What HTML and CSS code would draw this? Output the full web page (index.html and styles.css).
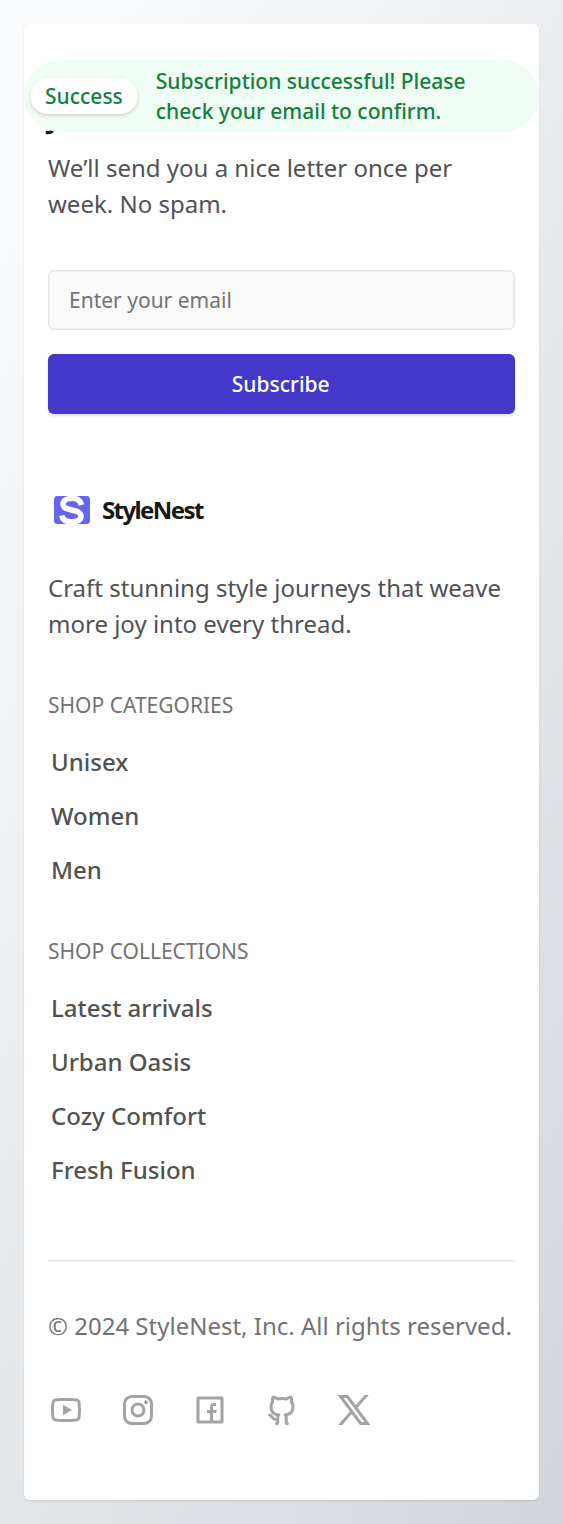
FILE: index.html
```html
<!DOCTYPE html>
<html lang="en">
<head>
<meta charset="utf-8">
<title>StyleNest</title>
<link rel="stylesheet" href="styles.css">
</head>
<body>
<div class="page">
  <main class="card">
    <div class="toast" role="status">
      <span class="toast-badge">Success</span>
      <p class="toast-text">Subscription successful! Please check your email to confirm.</p>
    </div>
    <section class="newsletter">
      <h2 class="newsletter-title">Join our newsletter</h2>
      <p class="copy">We’ll send you a nice letter once per week. No spam.</p>
      <form class="form">
        <input class="field" type="email" placeholder="Enter your email">
        <button class="submit" type="button">Subscribe</button>
      </form>
    </section>
    <footer class="footer">
      <div class="brand">
        <svg class="brand-mark" viewBox="0 0 36 28">
          <rect width="36" height="28" rx="3.5" fill="#6366f1"/>
          <path d="M27.500 9C26.500 5 23.300 2.200 18.500 2.200C13 2.200 9 4.500 9 8.300C9 12 12.500 13 17.500 14C22.500 15 27 16 27 20C27 24.200 23.500 25.800 18 25.800C12.500 25.800 8.500 24 7.800 19.500" fill="none" stroke="#fff" stroke-width="5.5"/>
        </svg>
        <span class="brand-name">StyleNest</span>
      </div>
      <p class="copy">Craft stunning style journeys that weave more joy into every thread.</p>
      <nav class="group">
        <h3 class="group-title">SHOP CATEGORIES</h3>
        <a class="link">Unisex</a>
        <a class="link">Women</a>
        <a class="link">Men</a>
      </nav>
      <nav class="group">
        <h3 class="group-title">SHOP COLLECTIONS</h3>
        <a class="link">Latest arrivals</a>
        <a class="link">Urban Oasis</a>
        <a class="link">Cozy Comfort</a>
        <a class="link">Fresh Fusion</a>
      </nav>
      <div class="legal">
        <p class="copyright">© 2024 StyleNest, Inc. All rights reserved.</p>
        <div class="social">
          <svg class="icon" viewBox="0 0 24 24"><path d="M19.607 6.995C19.531 6.697 19.315 6.472 19.068 6.403C18.63 6.281 16.501 6 12 6S5.373 6.281 4.932 6.403C4.688 6.471 4.472 6.696 4.395 6.995C4.286 7.419 4 9.196 4 12S4.286 16.581 4.395 17.006C4.471 17.303 4.687 17.528 4.933 17.597C5.373 17.719 7.501 18 12 18S18.63 17.719 19.07 17.597C19.314 17.529 19.53 17.304 19.607 17.005C19.716 16.581 20 14.8 20 12S19.716 7.419 19.607 6.995ZM21.544 6.498C22 8.28 22 12 22 12S22 15.72 21.544 17.502C21.29 18.487 20.547 19.262 19.606 19.524C17.897 20 12 20 12 20S6.108 20 4.396 19.524C3.451 19.258 2.709 18.483 2.458 17.502C2 15.72 2 12 2 12S2 8.28 2.458 6.498C2.712 5.513 3.455 4.738 4.396 4.476C6.108 4 12 4 12 4S17.897 4 19.606 4.476C20.551 4.742 21.293 5.517 21.544 6.498ZM10 15.5V8.5L16 12Z"/></svg>
          <svg class="icon" viewBox="0 0 24 24"><rect class="line" x="3" y="3" width="18" height="18" rx="4.8"/><circle class="line" cx="12" cy="12" r="4"/><circle cx="17.25" cy="6.75" r="1.25"/></svg>
          <svg class="icon" viewBox="0 0 24 24"><path d="M14 19H19V5H5V19H12V14H10V12H12V10.654C12 9.513 12.119 9.099 12.342 8.682C12.565 8.265 12.892 7.937 13.309 7.714C13.636 7.54 14.034 7.434 14.806 7.385C15.111 7.365 15.509 7.39 16 7.46V9.36H15.5C14.583 9.36 14.204 9.403 13.978 9.524C13.86 9.587 13.777 9.67 13.714 9.788C13.593 10.013 14 9.736 14 10.654V12H16.5L16 14H14ZM4 3H20C20.552 3 21 3.448 21 4V20C21 20.552 20.552 21 20 21H4C3.448 21 3 20.552 3 20V4C3 3.448 3.448 3 4 3Z"/></svg>
          <svg class="icon" viewBox="0 0 24 24"><path d="M5.884 18.653C5.584 18.453 5.326 18.198 5.024 17.837C4.915 17.707 4.473 17.152 4.558 17.258C4.095 16.683 3.803 16.417 3.502 16.309C2.982 16.123 2.711 15.55 2.898 15.03C3.084 14.51 3.657 14.24 4.177 14.426C4.929 14.696 5.438 15.161 6.124 16.014C6.03 15.897 6.464 16.441 6.557 16.553C6.748 16.78 6.887 16.918 6.996 16.991C7.201 17.128 7.585 17.187 8.147 17.131C8.171 16.749 8.241 16.378 8.349 16.036C5.381 15.31 3.701 13.395 3.701 9.64C3.701 8.401 4.07 7.284 4.759 6.348C4.542 5.454 4.574 4.373 5.061 3.156C5.173 2.877 5.404 2.663 5.69 2.574C5.772 2.55 5.818 2.539 5.899 2.527C6.702 2.403 7.836 2.697 9.314 3.623C10.181 3.419 11.089 3.315 12.001 3.315C12.913 3.315 13.82 3.419 14.685 3.623C16.162 2.69 17.299 2.396 18.107 2.527C18.192 2.54 18.265 2.558 18.325 2.578C18.606 2.67 18.832 2.882 18.941 3.156C19.428 4.373 19.461 5.453 19.243 6.347C19.934 7.283 20.301 8.392 20.301 9.64C20.301 13.397 18.627 15.305 15.659 16.032C15.784 16.447 15.85 16.911 15.85 17.412C15.85 18.077 15.847 18.711 15.842 19.423L15.838 20.128C16.213 20.211 16.523 20.508 16.603 20.909C16.711 21.45 16.36 21.977 15.819 22.086C14.679 22.313 13.835 21.554 13.835 20.561L13.838 20.115L13.843 19.409C13.847 18.702 13.85 18.072 13.85 17.412C13.85 16.715 13.666 16.26 13.424 16.051C12.763 15.481 13.098 14.397 13.965 14.3C16.931 13.967 18.301 12.818 18.301 9.64C18.301 8.685 17.989 7.896 17.388 7.236C17.13 6.952 17.057 6.547 17.199 6.191C17.365 5.777 17.435 5.234 17.294 4.577C16.793 4.719 16.174 5.02 15.426 5.529C15.182 5.694 14.877 5.744 14.593 5.664C13.773 5.433 12.891 5.315 12.001 5.315C11.111 5.315 10.229 5.433 9.409 5.664C9.127 5.744 8.823 5.695 8.58 5.531C7.827 5.024 7.206 4.724 6.711 4.584C6.567 5.237 6.638 5.778 6.803 6.191C6.946 6.547 6.872 6.952 6.614 7.236C6.017 7.891 5.701 8.694 5.701 9.64C5.701 12.812 7.072 13.968 10.023 14.3C10.888 14.397 11.225 15.477 10.568 16.048C10.375 16.216 10.138 16.78 10.138 17.412V20.561C10.138 21.547 9.304 22.287 8.179 22.09C7.635 21.995 7.271 21.477 7.366 20.933C7.438 20.52 7.753 20.212 8.138 20.128V19.138C7.228 19.199 6.477 19.05 5.884 18.653Z"/></svg>
          <svg class="icon" viewBox="0 0 24 24"><path d="M8 2H1L9.261 13.015L1.45 22H4.1L10.488 14.651L16 22H23L14.392 10.522L21.8 2H19.15L13.164 8.886ZM17 20L5 4H7L19 20Z"/></svg>
        </div>
      </div>
    </footer>
  </main>
</div>
</body>
</html>
```

FILE: styles.css
```css
* { box-sizing: border-box; }
body, h2, h3, p { margin: 0; }
body, input, button {
  font-family: "Noto Sans", sans-serif;
}
.page {
  width: 562.5px;
  height: 1524px;
  padding: 24px;
  background: linear-gradient(118deg, #f9fafb 9%, #d2d6db 100%);
}
.card {
  position: relative;
  height: 1476px;
  padding: 72px 24px 0;
  border-radius: 6px;
  background: #fff;
  box-shadow: 0 1px 3px rgba(0, 0, 0, .07), 0 1px 2px rgba(0, 0, 0, .04);
}
.toast {
  position: absolute;
  top: 36px;
  left: 0;
  right: 0;
  display: flex;
  align-items: center;
  gap: 18px;
  height: 72px;
  padding: 6px;
  border-radius: 36px;
  background: #f0fdf4;
  color: #15803d;
  font-size: 21px;
  font-weight: 500;
  line-height: 30px;
}
.toast-badge {
  padding: 3px 15px;
  border-radius: 18px;
  background: #fff;
  box-shadow: 0 1.5px 4px rgba(0, 0, 0, .1), 0 1.5px 3px rgba(0, 0, 0, .08);
}
.toast-text { width: 340px; }
.newsletter-title {
  margin-bottom: 12px;
  color: #171717;
  font-size: 30px;
  font-weight: 600;
  line-height: 42px;
}
.copy {
  color: #525252;
  font-size: 24px;
  line-height: 36px;
}
.form {
  display: flex;
  flex-direction: column;
  gap: 24px;
  margin-top: 48px;
}
.field, .submit {
  height: 60px;
  border-radius: 6px;
  font-size: 21px;
}
.field {
  padding: 0 20px;
  border: 1px solid #e5e5e5;
  background: #fafafa;
  box-shadow: inset 0 0 0 .5px #e5e5e5;
}
.field::placeholder { color: #737373; }
.submit {
  padding: 0 7px 0 6px;
  border: 0;
  background: #4338ca;
  box-shadow: 0 1.5px 3px rgba(0, 0, 0, .12);
  color: #fff;
  font-weight: 500;
}
.footer { margin-top: 72px; }
.brand {
  display: flex;
  align-items: center;
  gap: 12px;
  height: 48px;
  margin-bottom: 36px;
  padding-left: 6px;
}
.brand-mark { width: 36px; height: 28px; }
.brand-name {
  padding-bottom: 2px;
  color: #171717;
  font-size: 24px;
  font-weight: 700;
  letter-spacing: -1.6px;
}
.group {
  display: flex;
  flex-direction: column;
  gap: 18px;
  margin-top: 48px;
}
.group-title {
  margin-bottom: 6px;
  color: #737373;
  font-size: 21px;
  font-weight: 400;
  line-height: 30px;
}
.link {
  padding-left: 3px;
  color: #525252;
  font-size: 24px;
  font-weight: 500;
  line-height: 36px;
}
.legal {
  margin-top: 72px;
  padding-top: 47px;
  border-top: 1px solid #e5e5e5;
  box-shadow: inset 0 1px 0 #f0f0f0;
}
.copyright {
  color: #737373;
  font-size: 24px;
  line-height: 36px;
  white-space: nowrap;
}
.social {
  display: flex;
  gap: 36px;
  margin-top: 48px;
}
.icon { width: 36px; height: 36px; fill: #a3a3a3; }
.line { fill: none; stroke: #a3a3a3; stroke-width: 2; }
```
